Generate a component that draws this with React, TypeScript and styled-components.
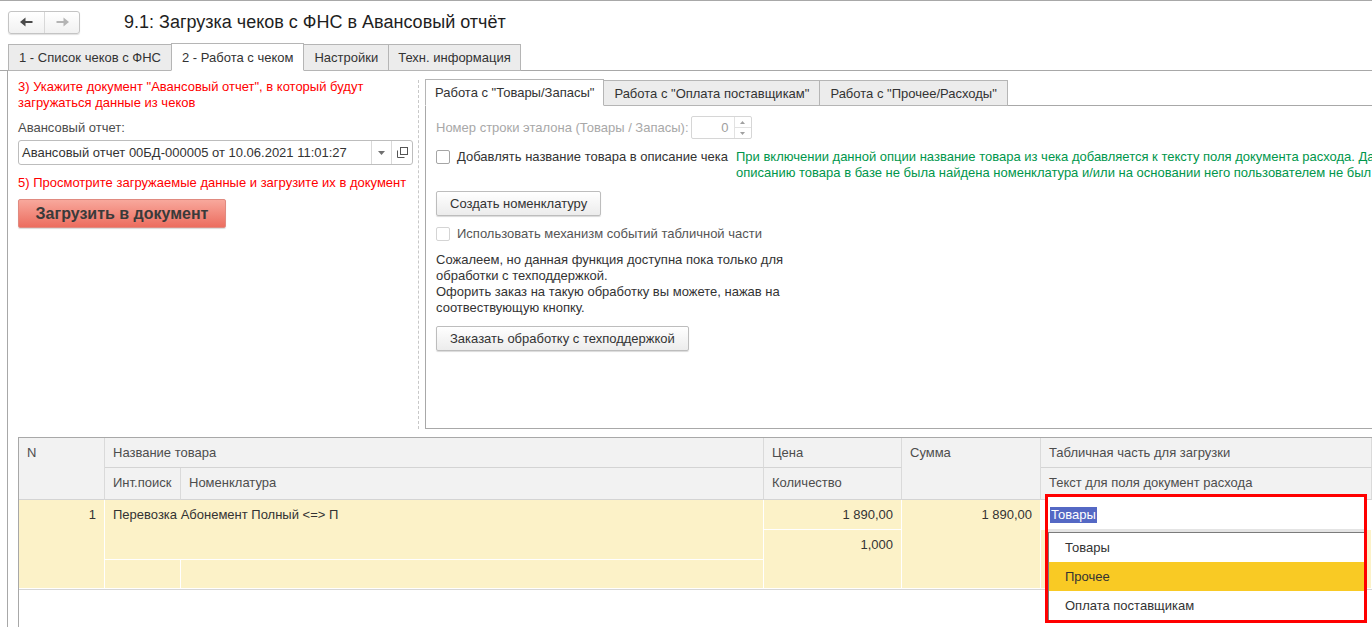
import React from "react";
import styled, { createGlobalStyle } from "styled-components";

const GlobalStyle = createGlobalStyle`
  html, body {
    margin: 0;
    padding: 0;
    background: #fff;
  }
  body {
    font-family: "Liberation Sans", Arial, sans-serif;
    font-size: 13px;
    color: #333;
    overflow: hidden;
  }
  * {
    box-sizing: border-box;
  }
`;

const Window = styled.div`
  width: 1372px;
  height: 627px;
  overflow: hidden;
  border-top: 1px solid #a8a8a8;
  display: flex;
  flex-direction: column;
`;

const Header = styled.div`
  height: 42px;
  flex-shrink: 0;
  display: flex;
  align-items: center;
  gap: 44px;
  padding-left: 8px;
`;

const NavGroup = styled.div`
  display: flex;
  height: 23px;
  border: 1px solid #c4c4c4;
  border-radius: 3px;
  background: linear-gradient(#ffffff, #f1f1f1);
  box-shadow: 0 1px 1px rgba(0, 0, 0, 0.12);
`;

const NavButton = styled.div`
  width: 35px;
  display: flex;
  align-items: center;
  justify-content: center;
  & + & {
    border-left: 1px solid #d8d8d8;
  }
`;

const Title = styled.div`
  font-size: 18px;
  color: #1e1e1e;
`;

const TabRow = styled.div<{ $height: number }>`
  height: ${(p) => p.$height}px;
  flex-shrink: 0;
  display: flex;
  align-items: flex-end;
  border-bottom: 1px solid #a8a8a8;
`;

const MainTabs = styled(TabRow)`
  padding-left: 8px;
`;

const Tab = styled.div<{ $active?: boolean; $h: number; $pad: number }>`
  position: relative;
  height: ${(p) => (p.$active ? p.$h + 1 : p.$h)}px;
  margin-bottom: -1px;
  margin-right: -1px;
  padding: 0 ${(p) => p.$pad}px;
  display: flex;
  align-items: center;
  white-space: nowrap;
  color: #333;
  border: 1px solid #b5b5b5;
  border-bottom-color: ${(p) => (p.$active ? "#fff" : "#b5b5b5")};
  background: ${(p) => (p.$active ? "#fff" : "#ececec")};
  z-index: ${(p) => (p.$active ? 1 : 0)};
`;

const MainBody = styled.div`
  flex: 1;
  min-height: 0;
  margin-left: 7px;
  border-left: 1px solid #a8a8a8;
  display: flex;
  flex-direction: column;
`;

const TopSection = styled.div`
  height: 366px;
  flex-shrink: 0;
  display: flex;
`;

const LeftCol = styled.div`
  width: 410px;
  flex-shrink: 0;
  padding: 8px 0 0 10px;
  display: flex;
  flex-direction: column;
`;

const Hint = styled.div<{ $mt?: number }>`
  color: #ff0000;
  line-height: 16px;
  width: 395px;
  margin-top: ${(p) => p.$mt ?? 0}px;
`;

const FieldLabel = styled.div`
  color: #4d4d4d;
  line-height: 16px;
  margin-top: 9px;
`;

const Field = styled.div`
  width: 395px;
  height: 25px;
  margin-top: 4px;
  display: flex;
  border: 1px solid #bdbdbd;
  border-radius: 3px;
  background: #fff;
`;

const FieldText = styled.div`
  flex: 1;
  padding-left: 3px;
  line-height: 23px;
  color: #333;
  white-space: nowrap;
  overflow: hidden;
`;

const FieldButton = styled.div<{ $w: number }>`
  width: ${(p) => p.$w}px;
  display: flex;
  align-items: center;
  justify-content: center;
  border-left: 1px solid #d9d9d9;
`;

const LoadButton = styled.div`
  width: 208px;
  height: 29px;
  margin-top: 8px;
  display: flex;
  align-items: center;
  justify-content: center;
  font-size: 16px;
  font-weight: bold;
  color: #3a3a3a;
  border: 1px solid #e08a80;
  border-radius: 2px;
  background: linear-gradient(#f8a89c, #ec6d5f);
  box-shadow: 0 1px 1px rgba(0, 0, 0, 0.15);
`;

const Separator = styled.div`
  width: 0;
  height: 349px;
  margin-top: 9px;
  border-left: 1px dashed #c8c8c8;
`;

const RightCol = styled.div`
  flex: 1;
  min-width: 0;
  margin-left: 6px;
  padding-top: 9px;
  display: flex;
  flex-direction: column;
`;

const SubPanel = styled.div`
  height: 323px;
  border-left: 1px solid #a8a8a8;
  border-bottom: 1px solid #a8a8a8;
  padding: 10px 0 0 10px;
  display: flex;
  flex-direction: column;
  align-items: flex-start;
  gap: 10px;
  overflow: hidden;
`;

const Row = styled.div<{ $gap: number }>`
  display: flex;
  align-items: flex-start;
  gap: ${(p) => p.$gap}px;
  white-space: nowrap;
`;

const DisabledLabel = styled.div`
  color: #a8a8a8;
  line-height: 23px;
`;

const NumberField = styled.div`
  width: 61px;
  height: 23px;
  display: flex;
  border: 1px solid #d6d6d6;
  border-radius: 2px;
`;

const NumberValue = styled.div`
  flex: 1;
  text-align: right;
  padding-right: 5px;
  line-height: 21px;
  color: #a0a0a0;
`;

const Spinner = styled.div`
  width: 17px;
  display: flex;
  flex-direction: column;
  border-left: 1px solid #e2e2e2;
`;

const SpinHalf = styled.div`
  flex: 1;
  display: flex;
  align-items: center;
  justify-content: center;
  & + & {
    border-top: 1px solid #e2e2e2;
  }
`;

const CheckLine = styled.div`
  display: flex;
  align-items: center;
  gap: 7px;
  height: 16px;
`;

const Checkbox = styled.div<{ $disabled?: boolean }>`
  width: 14px;
  height: 14px;
  border: 1px solid ${(p) => (p.$disabled ? "#d4d4d4" : "#a5a5a5")};
  border-radius: 2px;
  background: #fff;
`;

const CheckText = styled.span<{ $disabled?: boolean }>`
  color: ${(p) => (p.$disabled ? "#555" : "#333")};
  line-height: 16px;
`;

const GreenNote = styled.div`
  color: #00964b;
  line-height: 16px;
  white-space: nowrap;
`;

const Button = styled.div`
  height: 25px;
  padding: 0 13px;
  display: flex;
  align-items: center;
  color: #333;
  white-space: nowrap;
  border: 1px solid #bdbdbd;
  border-radius: 2px;
  background: linear-gradient(#ffffff, #ececec);
  box-shadow: 0 1px 1px rgba(0, 0, 0, 0.15);
`;

const Paragraph = styled.div`
  color: #333;
  line-height: 16px;
`;

const TableFrame = styled.div`
  flex: 1;
  margin-left: 10px;
  border-top: 1px solid #a8a8a8;
  border-left: 1px solid #a8a8a8;
`;

const Grid = styled.div`
  display: grid;
  grid-template-columns: 86px 76px 583px 138px 139px 1fr;
  grid-template-rows: 30px 32px 30px 30px 29px;
  border-bottom: 1px solid #d6d6d6;
`;

type CellKind = "head" | "data" | "edit";

const Cell = styled.div<{ $col: string; $row: string; $kind: CellKind; $right?: boolean }>`
  grid-column: ${(p) => p.$col};
  grid-row: ${(p) => p.$row};
  position: relative;
  padding: 7px 8px 0;
  line-height: 16px;
  white-space: nowrap;
  overflow: ${(p) => (p.$kind === "edit" ? "visible" : "hidden")};
  text-align: ${(p) => (p.$right ? "right" : "left")};
  color: ${(p) => (p.$kind === "head" ? "#4d4d4d" : "#333")};
  background: ${(p) =>
    p.$kind === "head" ? "#f2f2f2" : p.$kind === "edit" ? "#fff" : "#fcf2c8"};
  border-right: 1px solid ${(p) => (p.$kind === "head" ? "#dadada" : "#fff")};
  border-bottom: 1px solid ${(p) => (p.$kind === "head" ? "#d4d4d4" : "#fff")};
`;

const Popup = styled.div`
  position: absolute;
  left: 4px;
  top: -6px;
  width: 322px;
  height: 129px;
  border: 3px solid #ff0000;
  background: #fff;
  display: flex;
  flex-direction: column;
  z-index: 5;
`;

const PopupInput = styled.div`
  height: 35px;
  flex-shrink: 0;
  padding: 10px 0 0 2px;
  border-bottom: 3px solid #e4e4e4;
`;

const Selected = styled.span`
  display: inline-block;
  line-height: 16px;
  padding: 0 1px;
  color: #fff;
  background: #5468c4;
`;

const OptionList = styled.div`
  flex: 1;
  border-top: 1px solid #7b7b7b;
  border-left: 1px solid #7b7b7b;
  overflow: hidden;
`;

const Option = styled.div<{ $hover?: boolean }>`
  height: 29px;
  line-height: 29px;
  padding-left: 16px;
  color: #333;
  background: ${(p) => (p.$hover ? "#f9ca24" : "#fff")};
`;

const ArrowIcon = ({ dir, color }: { dir: "left" | "right"; color: string }) => (
  <svg width="13" height="10" viewBox="0 0 13 10">
    <path
      d={dir === "left" ? "M0 5 L5.5 0.5 V4 H12.5 V6 H5.5 V9.5 Z" : "M13 5 L7.5 0.5 V4 H0.5 V6 H7.5 V9.5 Z"}
      fill={color}
    />
  </svg>
);

const DropTriangle = () => (
  <svg width="7" height="4" viewBox="0 0 7 4">
    <path d="M0 0 H7 L3.5 4 Z" fill="#707070" />
  </svg>
);

const OpenIcon = () => (
  <svg width="11" height="11" viewBox="0 0 11 11">
    <rect x="3.5" y="0.5" width="7" height="7" fill="none" stroke="#555" />
    <path d="M0.5 3.5 V10.5 H7.5" fill="none" stroke="#555" />
  </svg>
);

const SpinArrow = ({ up }: { up?: boolean }) => (
  <svg width="5" height="3" viewBox="0 0 5 3">
    <path d={up ? "M0 3 H5 L2.5 0 Z" : "M0 0 H5 L2.5 3 Z"} fill="#a0a0a0" />
  </svg>
);

export default function App() {
  return (
    <>
      <GlobalStyle />
      <Window>
        <Header>
          <NavGroup>
            <NavButton>
              <ArrowIcon dir="left" color="#4a4a4a" />
            </NavButton>
            <NavButton>
              <ArrowIcon dir="right" color="#b4b4b4" />
            </NavButton>
          </NavGroup>
          <Title>9.1: Загрузка чеков с ФНС в Авансовый отчёт</Title>
        </Header>

        <MainTabs $height={28}>
          <Tab $h={27} $pad={10}>1 - Список чеков с ФНС</Tab>
          <Tab $h={27} $pad={10} $active>2 - Работа с чеком</Tab>
          <Tab $h={27} $pad={10}>Настройки</Tab>
          <Tab $h={27} $pad={9}>Техн. информация</Tab>
        </MainTabs>

        <MainBody>
          <TopSection>
            <LeftCol>
              <Hint>3) Укажите документ "Авансовый отчет", в который будут загружаться данные из чеков</Hint>
              <FieldLabel>Авансовый отчет:</FieldLabel>
              <Field>
                <FieldText>Авансовый отчет 00БД-000005 от 10.06.2021 11:01:27</FieldText>
                <FieldButton $w={20}>
                  <DropTriangle />
                </FieldButton>
                <FieldButton $w={21}>
                  <OpenIcon />
                </FieldButton>
              </Field>
              <Hint $mt={10}>5) Просмотрите загружаемые данные и загрузите их в документ</Hint>
              <LoadButton>Загрузить в документ</LoadButton>
            </LeftCol>

            <Separator />

            <RightCol>
              <TabRow $height={26}>
                <Tab $h={26} $pad={9} $active>Работа с "Товары/Запасы"</Tab>
                <Tab $h={26} $pad={10}>Работа с "Оплата поставщикам"</Tab>
                <Tab $h={26} $pad={10}>Работа с "Прочее/Расходы"</Tab>
              </TabRow>
              <SubPanel>
                <Row $gap={2}>
                  <DisabledLabel>Номер строки эталона (Товары / Запасы):</DisabledLabel>
                  <NumberField>
                    <NumberValue>0</NumberValue>
                    <Spinner>
                      <SpinHalf>
                        <SpinArrow up />
                      </SpinHalf>
                      <SpinHalf>
                        <SpinArrow />
                      </SpinHalf>
                    </Spinner>
                  </NumberField>
                </Row>
                <Row $gap={8}>
                  <CheckLine>
                    <Checkbox />
                    <CheckText>Добавлять название товара в описание чека</CheckText>
                  </CheckLine>
                  <GreenNote>
                    При включении данной опции название товара из чека добавляется к тексту поля документа расхода. Да
                    <br />
                    описанию товара в базе не была найдена номенклатура и/или на основании него пользователем не был с
                  </GreenNote>
                </Row>
                <Button>Создать номенклатуру</Button>
                <CheckLine>
                  <Checkbox $disabled />
                  <CheckText $disabled>Использовать механизм событий табличной части</CheckText>
                </CheckLine>
                <Paragraph>
                  Сожалеем, но данная функция доступна пока только для
                  <br />
                  обработки с техподдержкой.
                  <br />
                  Офорить заказ на такую обработку вы можете, нажав на
                  <br />
                  соотвествующую кнопку.
                </Paragraph>
                <Button>Заказать обработку с техподдержкой</Button>
              </SubPanel>
            </RightCol>
          </TopSection>

          <TableFrame>
            <Grid>
              <Cell $kind="head" $col="1" $row="1 / 3">N</Cell>
              <Cell $kind="head" $col="2 / 4" $row="1">Название товара</Cell>
              <Cell $kind="head" $col="2" $row="2">Инт.поиск</Cell>
              <Cell $kind="head" $col="3" $row="2">Номенклатура</Cell>
              <Cell $kind="head" $col="4" $row="1">Цена</Cell>
              <Cell $kind="head" $col="4" $row="2">Количество</Cell>
              <Cell $kind="head" $col="5" $row="1 / 3">Сумма</Cell>
              <Cell $kind="head" $col="6" $row="1">Табличная часть для загрузки</Cell>
              <Cell $kind="head" $col="6" $row="2">Текст для поля документ расхода</Cell>

              <Cell $kind="data" $col="1" $row="3 / 6" $right>1</Cell>
              <Cell $kind="data" $col="2 / 4" $row="3 / 5">Перевозка Абонемент Полный &lt;=&gt; П</Cell>
              <Cell $kind="data" $col="2" $row="5" />
              <Cell $kind="data" $col="3" $row="5" />
              <Cell $kind="data" $col="4" $row="3" $right>1 890,00</Cell>
              <Cell $kind="data" $col="4" $row="4 / 6" $right>1,000</Cell>
              <Cell $kind="data" $col="5" $row="3 / 6" $right>1 890,00</Cell>
              <Cell $kind="edit" $col="6" $row="3">
                <Popup>
                  <PopupInput>
                    <Selected>Товары</Selected>
                  </PopupInput>
                  <OptionList>
                    <Option>Товары</Option>
                    <Option $hover>Прочее</Option>
                    <Option>Оплата поставщикам</Option>
                  </OptionList>
                </Popup>
              </Cell>
              <Cell $kind="data" $col="6" $row="4 / 6" />
            </Grid>
          </TableFrame>
        </MainBody>
      </Window>
    </>
  );
}
